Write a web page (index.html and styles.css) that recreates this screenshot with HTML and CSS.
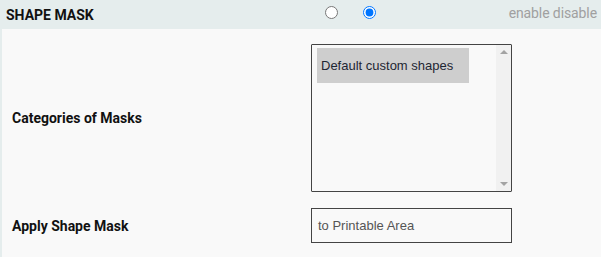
FILE: index.html
```html
<!DOCTYPE html>
<html lang="en">
<head>
    <meta charset="UTF-8">
    <title>Shape Mask</title>
    <link rel="stylesheet" href="styles.css">
</head>
<body>
    <div class="section-head">
        <h3>SHAPE MASK</h3>
        <div class="toggle">
            <input type="radio" name="shape-mask" value="enable">
            <input type="radio" name="shape-mask" value="disable" checked>
        </div>
        <span class="toggle-hint">enable disable</span>
    </div>

    <div class="section-body">
        <div class="field">
            <label class="field-label">Categories of Masks</label>
            <div class="listbox">
                <div class="listbox-items">
                    <div class="listbox-item selected">Default custom shapes</div>
                </div>
                <div class="listbox-scroll">
                    <span class="arrow up"></span>
                    <span class="arrow down"></span>
                </div>
            </div>
        </div>

        <div class="field">
            <label class="field-label">Apply Shape Mask</label>
            <div class="text-box">to Printable Area</div>
        </div>
    </div>
</body>
</html>
```

FILE: styles.css
```css
body {
    margin: 0;
    font-family: Roboto, sans-serif;
    background: #f9f9f9;
    color: #111;
}

.section-head {
    height: 29px;
    background: #e5eded;
    display: flex;
    align-items: center;
    padding: 0 4px 0 6px;
}

.section-head h3 {
    margin: 0;
    font-size: 14px;
    font-weight: 700;
    width: 319px;
}

.toggle {
    display: flex;
    gap: 25px;
    margin-top: -4px;
}

.toggle input {
    margin: 0;
    width: 13px;
    height: 13px;
}

.toggle-hint {
    margin-left: auto;
    font-size: 14px;
    letter-spacing: -0.1px;
    color: #a0a0a0;
    margin-top: -3px;
}

.section-body {
    border-left: 2px solid #e5eded;
    padding-top: 15px;
    height: 228px;
    box-sizing: border-box;
}

.field {
    display: flex;
    align-items: center;
    margin-bottom: 16px;
}

.field-label {
    width: 309px;
    padding-left: 10px;
    box-sizing: border-box;
    font-size: 14px;
    font-weight: 700;
}

.listbox {
    width: 201px;
    height: 148px;
    box-sizing: border-box;
    border: 1px solid #444;
    border-radius: 1px;
    display: flex;
    font-family: "Liberation Sans", Arial, sans-serif;
    font-size: 13px;
}

.listbox-items {
    flex: 1;
    padding: 3px 0 0 5px;
}

.listbox-item {
    width: 152px;
    height: 35px;
    box-sizing: border-box;
    padding-left: 4px;
    line-height: 35px;
    color: #1e2633;
}

.listbox-item.selected {
    background: #cecece;
}

.listbox-scroll {
    width: 15px;
    background: #f1f1f1;
    display: flex;
    flex-direction: column;
    justify-content: space-between;
    align-items: center;
    padding: 5px 0;
}

.arrow {
    width: 0;
    height: 0;
    border-left: 4px solid transparent;
    border-right: 4px solid transparent;
}

.arrow.up {
    border-bottom: 4px solid #a3a3a3;
}

.arrow.down {
    border-top: 4px solid #a3a3a3;
}

.text-box {
    width: 201px;
    height: 35px;
    box-sizing: border-box;
    border: 1px solid #444;
    padding-left: 6px;
    line-height: 33px;
    font-family: "Liberation Sans", Arial, sans-serif;
    font-size: 13px;
    color: #555;
}
```
